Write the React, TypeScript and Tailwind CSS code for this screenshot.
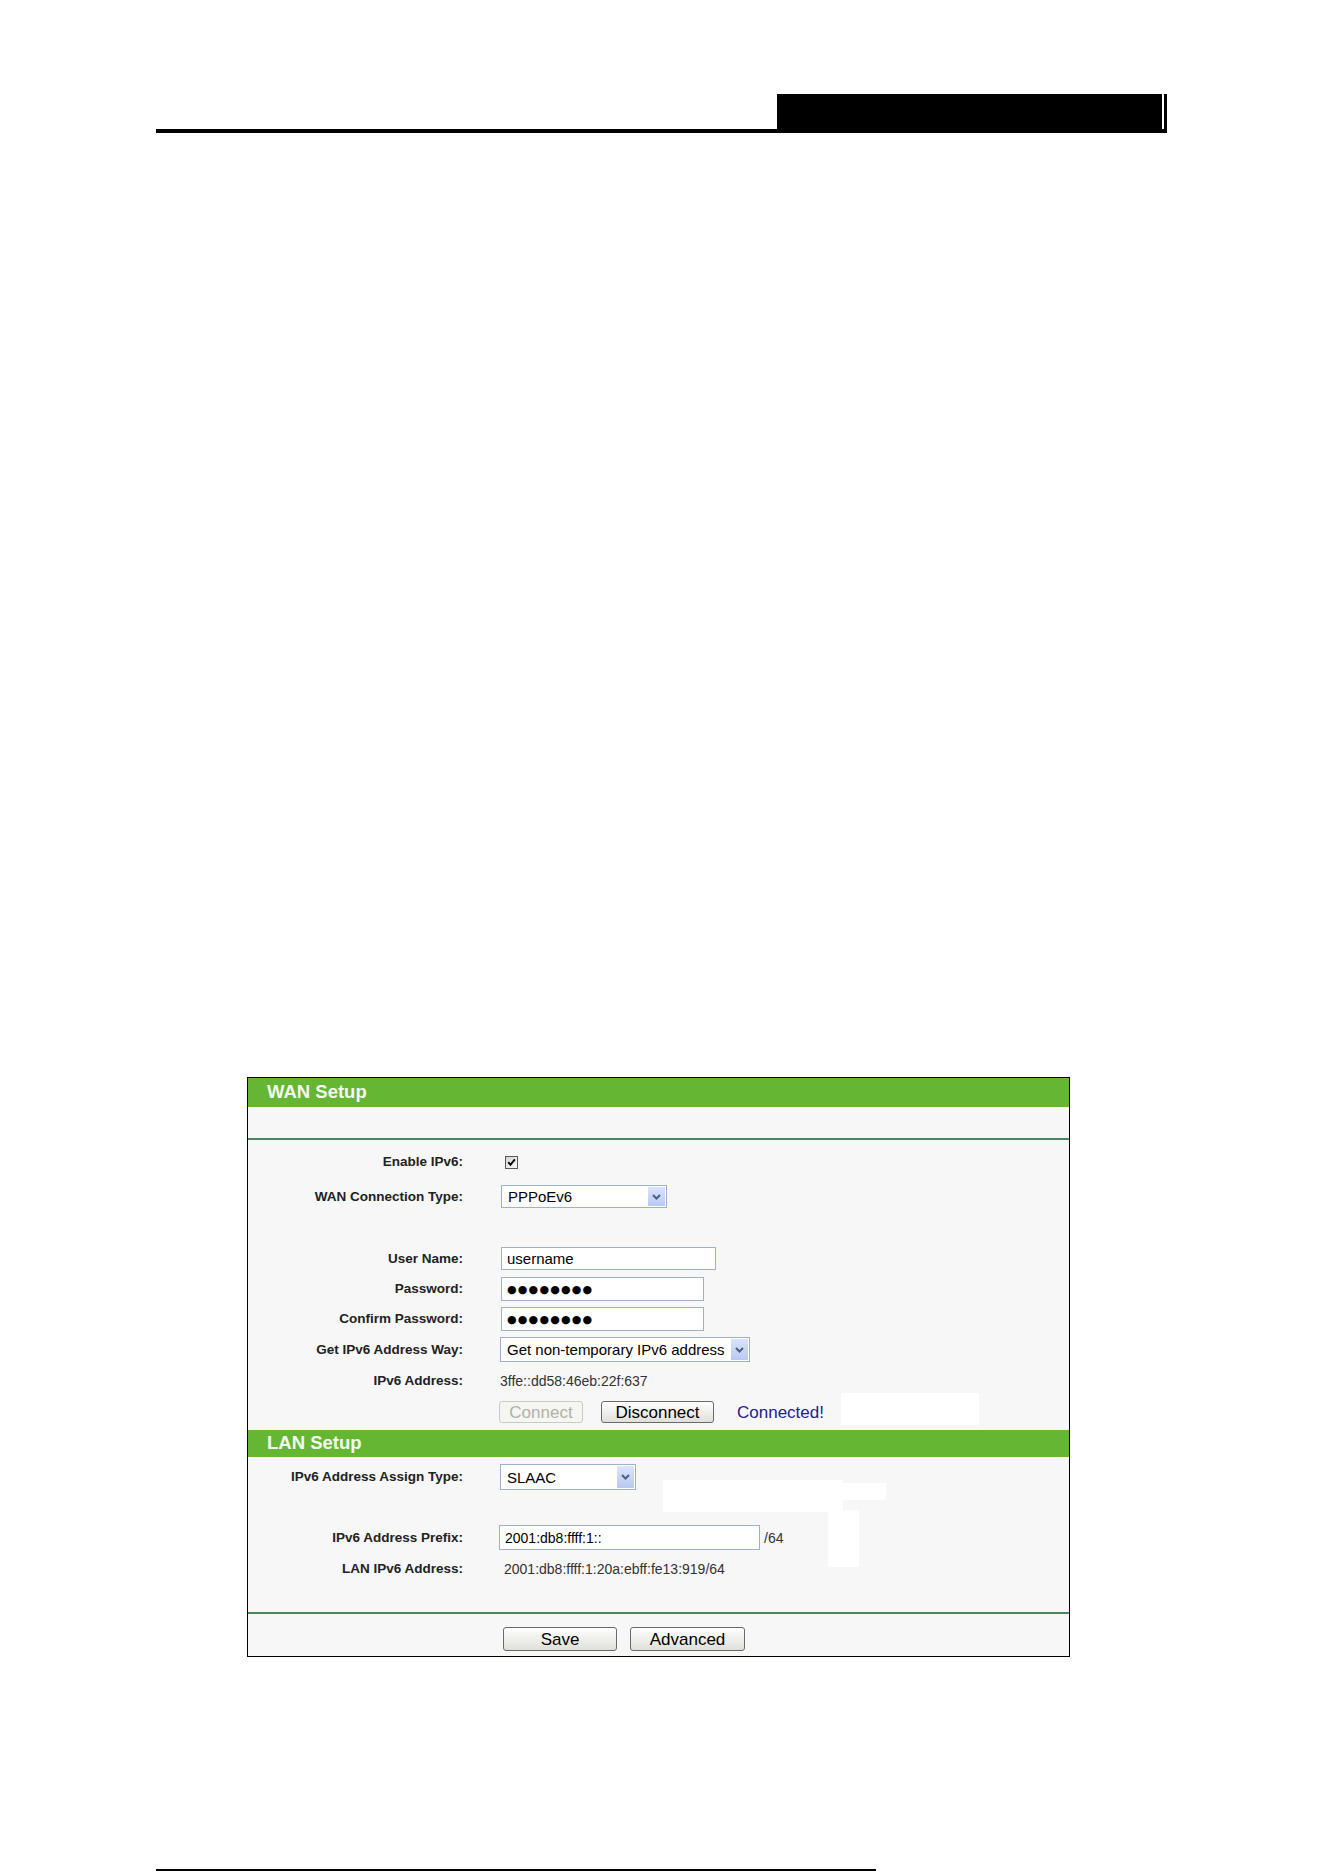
import type { ReactNode } from 'react';

// Formulario de configuración IPv6 (captura del manual del router)

const font = { fontFamily: '"Liberation Sans", Arial, sans-serif' };

function Label({ children }: { children?: ReactNode }) {
  return (
    <div className="w-[215px] shrink-0 text-right font-bold text-[13.5px] leading-none text-[#222]">
      {children}
    </div>
  );
}

function Chevron() {
  return (
    <svg width="9" height="6" viewBox="0 0 9 6">
      <path d="M1 1 L4.5 4.5 L8 1" fill="none" stroke="#4b5f86" strokeWidth="2" />
    </svg>
  );
}

function Select({ value, className }: { value: string; className: string }) {
  return (
    <div className={`flex items-stretch border border-[#9db0cf] bg-white ${className}`}>
      <span className="flex flex-1 items-center pl-[6px] text-[15px] leading-none text-black">{value}</span>
      <span className="m-[1px] flex w-[17px] items-center justify-center bg-linear-to-b from-[#dbe4fc] to-[#b8c8f2]">
        <Chevron />
      </span>
    </div>
  );
}

function TextBox({ className, children }: { className: string; children?: ReactNode }) {
  return (
    <div className={`flex items-center border border-[#9db0cf] bg-white pl-[5px] leading-none text-black ${className}`}>
      {children}
    </div>
  );
}

function Dots() {
  return (
    <span className="text-[11px] tracking-[1.2px]" style={{ fontFamily: '"DejaVu Sans", sans-serif' }}>
      ●●●●●●●●
    </span>
  );
}

function Button({ children, className, disabled }: { children: ReactNode; className: string; disabled?: boolean }) {
  return (
    <button
      className={
        disabled
          ? `flex items-center justify-center rounded-[3px] border border-[#cbcbc2] bg-[#f5f5f1] text-[17px] leading-none text-[#b0b0ac] ${className}`
          : `flex items-center justify-center rounded-[3px] border border-[#6a6a6a] bg-linear-to-b from-[#fefefe] to-[#e0e0da] text-[17px] leading-none text-black ${className}`
      }
    >
      {children}
    </button>
  );
}

function SectionHeader({ title, className }: { title: string; className: string }) {
  return (
    <div className={`flex items-center bg-[#65b633] pl-[19px] text-[18.5px] font-bold leading-none text-[#f4faef] ${className}`}>
      {title}
    </div>
  );
}

export default function App() {
  return (
    <div className="min-h-[1872px] w-[1324px] bg-white" style={font}>
      {/* cabecera de la página */}
      <div className="pl-[156px] pt-[94px]">
        <div className="w-[1011px]">
          <div className="flex h-[35px] justify-end">
            <div className="w-[385px] bg-black" />
            <div className="w-[2px]" />
            <div className="w-[3px] bg-black" />
          </div>
          <div className="h-[4px] bg-black" />
        </div>
      </div>

      {/* panel */}
      <div className="relative ml-[247px] mt-[944px] w-[823px] border border-black bg-[#f7f7f8] pb-[5px]">
        <div className="absolute left-[593px] top-[315px] h-[32px] w-[138px] bg-white" />
        <div className="absolute left-[415px] top-[402px] h-[32px] w-[180px] bg-white" />
        <div className="absolute left-[595px] top-[405px] h-[17px] w-[43px] bg-white" />
        <div className="absolute left-[580px] top-[432px] h-[57px] w-[31px] bg-white" />

        <SectionHeader title="WAN Setup" className="h-[29px]" />
        <div className="h-[31px]" />
        <div className="h-[2px] bg-[#4a8463]" />

        <div className="relative">
          <div className="mt-[10px] flex h-[24px] items-center">
            <Label>Enable IPv6:</Label>
            <span className="ml-[42px] flex h-[13px] w-[13px] items-center justify-center border border-[#5a5a5a] bg-linear-to-br from-[#d4d4d4] to-[#fbfbfb]">
              <svg width="9" height="9" viewBox="0 0 9 9">
                <path d="M1.3 4.2 L3.5 6.8 L7.8 1.4" fill="none" stroke="#000" strokeWidth="1.9" />
              </svg>
            </span>
          </div>

          <div className="mt-[11px] flex h-[23px] items-center">
            <Label>WAN Connection Type:</Label>
            <Select value="PPPoEv6" className="ml-[38px] h-[23px] w-[166px]" />
          </div>

          <div className="mt-[39px] flex h-[23px] items-center">
            <Label>User Name:</Label>
            <TextBox className="ml-[38px] h-[23px] w-[215px] text-[15px]">username</TextBox>
          </div>

          <div className="mt-[7px] flex h-[24px] items-center">
            <Label>Password:</Label>
            <TextBox className="ml-[38px] h-[24px] w-[203px]">
              <Dots />
            </TextBox>
          </div>

          <div className="mt-[6px] flex h-[24px] items-center">
            <Label>Confirm Password:</Label>
            <TextBox className="ml-[38px] h-[24px] w-[203px]">
              <Dots />
            </TextBox>
          </div>

          <div className="mt-[6px] flex h-[25px] items-center">
            <Label>Get IPv6 Address Way:</Label>
            <Select value="Get non-temporary IPv6 address" className="ml-[37px] h-[25px] w-[250px]" />
          </div>

          <div className="mt-[9px] flex h-[20px] items-center">
            <Label>IPv6 Address:</Label>
            <span className="ml-[37px] text-[14px] leading-none text-[#333]">3ffe::dd58:46eb:22f:637</span>
          </div>

          <div className="mt-[10px] flex h-[22px] items-center">
            <Label />
            <Button disabled className="ml-[36px] h-[22px] w-[84px]">
              Connect
            </Button>
            <Button className="ml-[18px] h-[22px] w-[113px]">Disconnect</Button>
            <span className="ml-[23px] text-[17px] leading-none text-[#22228f]">Connected!</span>
          </div>
        </div>

        <SectionHeader title="LAN Setup" className="relative mt-[7px] h-[27px]" />

        <div className="relative">
          <div className="mt-[7px] flex h-[26px] items-center">
            <Label>IPv6 Address Assign Type:</Label>
            <Select value="SLAAC" className="ml-[37px] h-[26px] w-[136px]" />
          </div>

          <div className="mt-[35px] flex h-[25px] items-center">
            <Label>IPv6 Address Prefix:</Label>
            <TextBox className="ml-[36px] h-[25px] w-[261px] text-[14px] text-[#222]">2001:db8:ffff:1::</TextBox>
            <span className="ml-[4px] text-[14px] leading-none text-[#333]">/64</span>
          </div>

          <div className="mt-[9px] flex h-[20px] items-center">
            <Label>LAN IPv6 Address:</Label>
            <span className="ml-[41px] text-[14px] leading-none text-[#333]">2001:db8:ffff:1:20a:ebff:fe13:919/64</span>
          </div>
        </div>

        <div className="mt-[33px] h-[2px] bg-[#4a8463]" />

        <div className="mt-[13px] flex h-[24px] items-center">
          <div className="w-[255px]" />
          <Button className="h-[24px] w-[114px]">Save</Button>
          <Button className="ml-[13px] h-[24px] w-[115px]">Advanced</Button>
        </div>
      </div>

      {/* línea inferior */}
      <div className="ml-[156px] mt-[212px] h-[2px] w-[720px] bg-black" />
    </div>
  );
}
